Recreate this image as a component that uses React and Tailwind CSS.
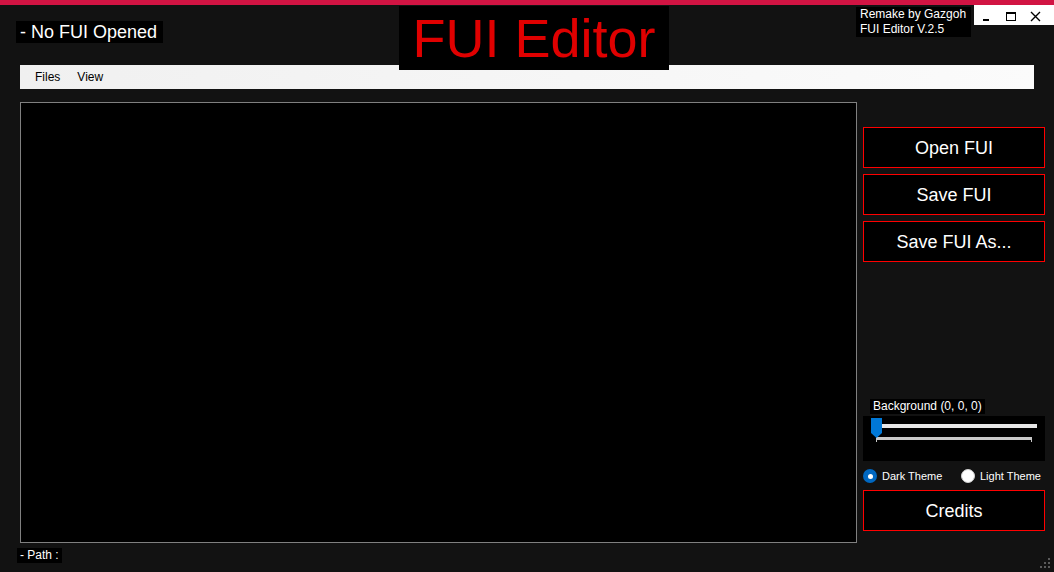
import React, { useState } from 'react';

const font = { fontFamily: '"Liberation Sans", Arial, sans-serif' };

const SideButton = ({ label }) => (
  <button className="h-[41px] w-full bg-black border border-[#ff0000] text-white text-[18px] leading-none flex items-center justify-center">
    {label}
  </button>
);

const Radio = ({ checked, label, onClick, className }) => (
  <button onClick={onClick} className={`flex items-center gap-[5px] text-white text-[11px] whitespace-nowrap ${className || ''}`}>
    {checked ? (
      <span className="w-[14px] h-[14px] shrink-0 rounded-full bg-[#0067c0] flex items-center justify-center">
        <span className="w-[5px] h-[5px] rounded-full bg-white" />
      </span>
    ) : (
      <span className="w-[14px] h-[14px] shrink-0 rounded-full bg-white border border-[#d0d0d0]" />
    )}
    <span>{label}</span>
  </button>
);

export default function App() {
  const [dark, setDark] = useState(true);

  return (
    <div style={font} className="relative w-[1054px] h-[572px] bg-[#121212] overflow-hidden flex flex-col">
      {/* top accent strip */}
      <div className="h-[5px] bg-[#d11443] shrink-0" />

      {/* header */}
      <div className="h-[60px] shrink-0 pl-[16px] pt-[16px]">
        <div className="inline-block bg-black text-white text-[18px] leading-[22px] pl-[4px] pr-[6px]">- No FUI Opened</div>
      </div>

      {/* title label, drawn over the menu strip */}
      <div className="absolute left-[399px] top-[6px] w-[270px] h-[64px] bg-black flex items-center justify-center">
        <span className="text-[#e00000] text-[54px] leading-none">FUI Editor</span>
      </div>

      {/* credits label + window buttons */}
      <div className="absolute left-[856px] top-[7px] w-[115px] h-[30px] bg-black text-white text-[12px] leading-[15px] pl-[4px]">
        <div>Remake by Gazgoh</div>
        <div>FUI Editor V.2.5</div>
      </div>
      <div className="absolute left-[974px] top-[5px] w-[80px] h-[20px] bg-white flex items-center">
        <svg width="80" height="20" viewBox="0 0 80 20">
          <rect x="9" y="14" width="6" height="2" fill="#000" />
          <rect x="32.5" y="7.5" width="9" height="8" fill="none" stroke="#000" strokeWidth="1" />
          <rect x="32" y="7" width="10" height="2" fill="#000" />
          <path d="M57 7 L66 16 M66 7 L57 16" stroke="#000" strokeWidth="1.4" />
        </svg>
      </div>

      {/* menu strip */}
      <div className="mx-[20px] h-[24px] shrink-0 bg-gradient-to-r from-[#f0f0f0] to-[#fbfbfb] flex items-center pl-[15px] gap-[17px] text-[12px] text-black">
        <span>Files</span>
        <span>View</span>
      </div>

      {/* main area */}
      <div className="flex mt-[13px] ml-[20px]">
        <div className="w-[837px] h-[441px] bg-black border border-[#808080]" />

        <div className="ml-[6px] w-[182px] pt-[25px] flex flex-col">
          <div className="flex flex-col gap-[6px]">
            <SideButton label="Open FUI" />
            <SideButton label="Save FUI" />
            <SideButton label="Save FUI As..." />
          </div>

          <div className="mt-[137px] ml-[7px] self-start bg-black text-white text-[12px] leading-[15px] px-[3px]">
            Background (0, 0, 0)
          </div>

          <div className="mt-[2px] h-[45px] bg-black relative">
            {/* track */}
            <div className="absolute left-[16px] top-[8px] w-[158px] h-[4px] bg-[#e7e7e7]" />
            {/* tick line */}
            <div className="absolute left-[13px] top-[21px] w-[156px] h-[3px] bg-[#c8c8c8]" />
            <div className="absolute left-[13px] top-[21px] w-[1px] h-[5px] bg-[#c8c8c8]" />
            <div className="absolute left-[168px] top-[21px] w-[1px] h-[5px] bg-[#c8c8c8]" />
            {/* thumb */}
            <svg className="absolute left-[8px] top-[2px]" width="11" height="20" viewBox="0 0 11 20">
              <path d="M0 0 H11 V15 L5.5 20 L0 15 Z" fill="#0078d7" />
            </svg>
          </div>

          <div className="mt-[6px] h-[18px] flex items-center">
            <Radio className="w-[98px]" checked={dark} label="Dark Theme" onClick={() => setDark(true)} />
            <Radio checked={!dark} label="Light Theme" onClick={() => setDark(false)} />
          </div>

          <div className="mt-[5px]">
            <SideButton label="Credits" />
          </div>
        </div>
      </div>

      {/* path label */}
      <div className="mt-[5px] ml-[17px] self-start bg-black text-white text-[12px] leading-[15px] px-[3px]">- Path :</div>

      {/* resize grip */}
      <svg className="absolute right-[3px] bottom-[3px]" width="11" height="11" viewBox="0 0 11 11">
        {[[8, 0], [4, 4], [8, 4], [0, 8], [4, 8], [8, 8]].map(([x, y], i) => (
          <rect key={i} x={x} y={y} width="2" height="2" fill="#5a5a5a" />
        ))}
      </svg>
    </div>
  );
}
